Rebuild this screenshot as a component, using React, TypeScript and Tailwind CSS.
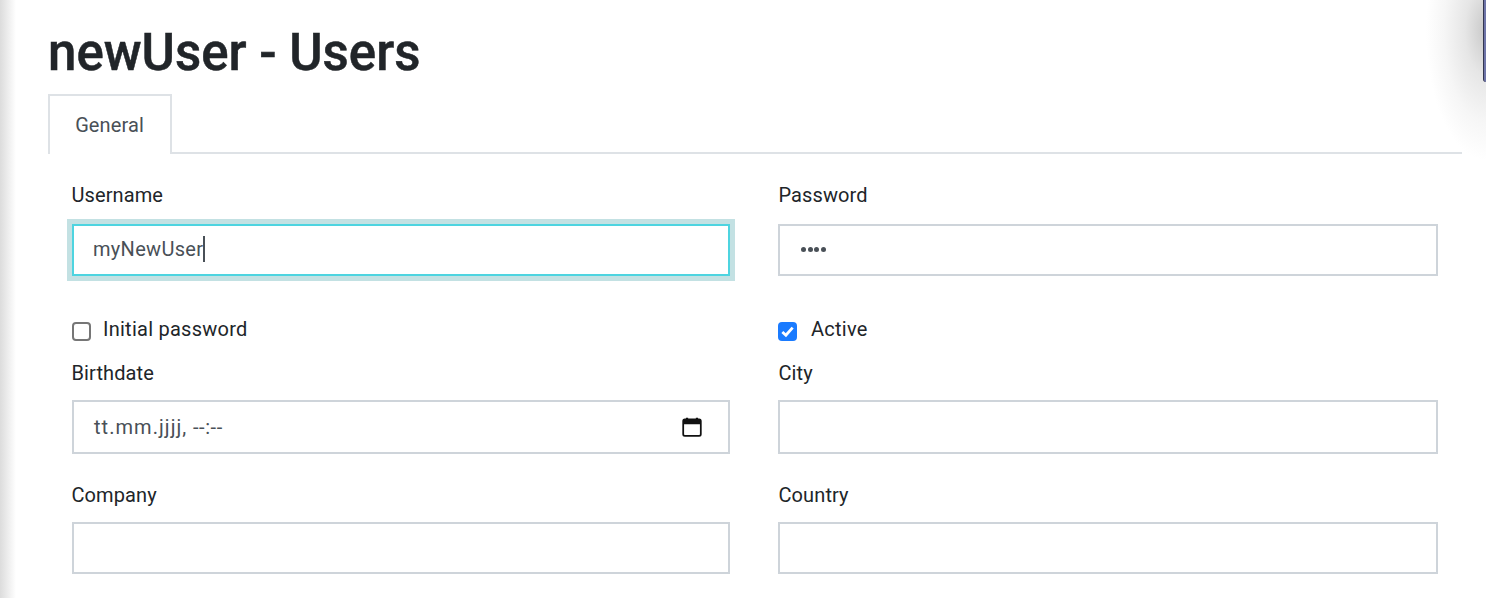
import React from 'react';

function Field({ label, left, children }: { label: string; left?: boolean; children?: React.ReactNode }) {
  return (
    <div className="flex flex-col">
      <label className={left ? 'text-[20px] leading-[30px] tracking-[0.1px] -ml-[0.5px] text-[#212529] mb-[14px]' : 'text-[20px] leading-[30px] tracking-[0.1px] ml-[0.5px] text-[#212529] mb-[14px]'}>
        {label}
      </label>
      {children}
    </div>
  );
}

function TextBox({ children }: { children?: React.ReactNode }) {
  return (
    <div className="h-[52px] border-2 border-[#ced4da] bg-white pl-[19px] pr-[24px] flex items-center text-[20px] text-[#495057]">
      {children}
    </div>
  );
}

export default function App() {
  return (
    <div className="relative h-[598px] w-[1486px] overflow-hidden bg-white font-['Roboto',sans-serif]">
      {/* edge shadows */}
      <div className="absolute left-0 top-0 h-full w-[16px] bg-gradient-to-r from-[#dcdcdc] to-white" />
      <div className="absolute right-0 top-0 h-[170px] w-[60px] bg-[radial-gradient(ellipse_60px_130px_at_100%_30px,#c8c8c8_0%,#e6e6e6_35%,#f6f6f6_70%,#ffffff_100%)]" />
      <div className="absolute right-0 top-0 h-[82px] w-[3px] rounded-bl-[3px] bg-[#6e74a8] border-l border-[#33364f]" />

      <div className="relative ml-[48px] w-[1414px] pt-[22px]">
        <h1 className="text-[51px] leading-[62px] font-medium text-[#212529] [-webkit-text-stroke:0.5px_#212529]">newUser - Users</h1>

        <div className="mt-[10px] flex border-b-2 border-[#dee2e6] h-[60px]">
          <div className="h-[60px] w-[124px] border-2 border-b-0 border-[#dee2e6] bg-white flex items-center justify-center pr-[1px] text-[20px] tracking-[0.1px] text-[#495057] -mb-[2px]">
            General
          </div>
        </div>

        <div className="mx-[24px] pt-[26px] grid grid-cols-[658px_660px] gap-x-[48px]">
          <Field label="Username" left>
            <div className="h-[52px] border-2 border-[#4dd4e0] outline-[5px] outline-[#c3e1e3] bg-white pl-[19px] pb-[2px] flex items-center text-[20px] tracking-[0.3px] text-[#495057]">
              myNewUser<span className="inline-block h-[26px] w-[1.5px] bg-[#495057]" />
            </div>
          </Field>
          <Field label="Password">
            <TextBox>
              <span className="flex gap-[1.5px] ml-[2px] mb-[2px]">
                <i className="block h-[5px] w-[5px] rounded-full bg-[#495057]" />
                <i className="block h-[5px] w-[5px] rounded-full bg-[#495057]" />
                <i className="block h-[5px] w-[5px] rounded-full bg-[#495057]" />
                <i className="block h-[5px] w-[5px] rounded-full bg-[#495057]" />
              </span>
            </TextBox>
          </Field>

          <div className="mt-[38px] h-[30px] flex items-center text-[20px] tracking-[0.25px] text-[#212529]">
            <span className="mr-[12px] mt-[4px] h-[19px] w-[19px] rounded-[4px] border-2 border-[#767676] bg-white" />
            Initial password
          </div>
          <div className="mt-[38px] h-[30px] flex items-center text-[20px] tracking-[0.25px] text-[#212529]">
            <span className="mr-[14px] mt-[4px] h-[19px] w-[19px] rounded-[4px] bg-[#1a7bff] flex items-center justify-center">
              <svg viewBox="0 0 16 16" className="h-[15px] w-[15px]" fill="none" stroke="white" strokeWidth="3">
                <path d="M2.5 8.5 L6.3 12 L13.5 3.8" />
              </svg>
            </span>
            Active
          </div>

          <div className="mt-[14px]">
            <Field label="Birthdate" left>
              <div className="h-[54px] -mt-[2px] border-2 border-[#ced4da] bg-white pl-[20px] pr-[25px] flex items-center justify-between text-[20px] text-[#495057]">
                <span>
                  <span className="tracking-[1.05px]">tt.mm.jjjj,</span>
                  <span className="tracking-[0.6px]"> --:--</span>
                </span>
                <svg viewBox="0 0 20 20" className="h-[22px] w-[22px]" fill="none">
                  <path d="M5.5 1.5v2M14.5 1.5v2" stroke="#111" strokeWidth="2" />
                  <rect x="2" y="3" width="16" height="15" rx="1.5" stroke="#111" strokeWidth="1.6" />
                  <rect x="2" y="3" width="16" height="4.5" fill="#111" />
                </svg>
              </div>
            </Field>
          </div>
          <div className="mt-[14px]">
            <Field label="City">
              <div className="h-[54px] -mt-[2px] border-2 border-[#ced4da] bg-white" />
            </Field>
          </div>

          <div className="mt-[26px]">
            <Field label="Company" left>
              <div className="-mt-[2px]"><TextBox /></div>
            </Field>
          </div>
          <div className="mt-[26px]">
            <Field label="Country">
              <div className="-mt-[2px]"><TextBox /></div>
            </Field>
          </div>
        </div>
      </div>
    </div>
  );
}
